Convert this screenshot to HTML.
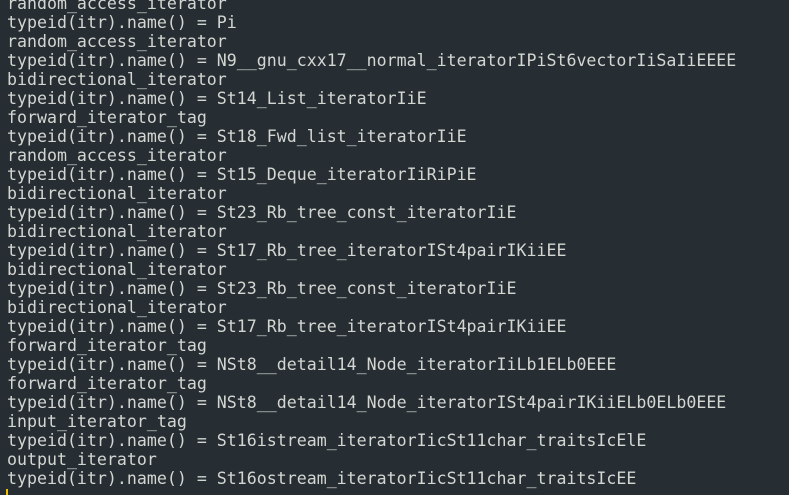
<!DOCTYPE html>
<html><head><style>
html,body{margin:0;padding:0;}
body{width:789px;height:495px;overflow:hidden;background:#262e33;position:relative;}
pre{position:absolute;left:7px;top:-6.5px;margin:0;font-family:"DejaVu Sans Mono","Liberation Mono",monospace;font-size:16.6px;line-height:19px;color:#d4d6d2;}
.cur{position:absolute;left:6px;top:489px;width:2px;height:6px;background:#f0c000;}
</style></head><body>
<pre>random_access_iterator
typeid(itr).name() = Pi
random_access_iterator
typeid(itr).name() = N9__gnu_cxx17__normal_iteratorIPiSt6vectorIiSaIiEEEE
bidirectional_iterator
typeid(itr).name() = St14_List_iteratorIiE
forward_iterator_tag
typeid(itr).name() = St18_Fwd_list_iteratorIiE
random_access_iterator
typeid(itr).name() = St15_Deque_iteratorIiRiPiE
bidirectional_iterator
typeid(itr).name() = St23_Rb_tree_const_iteratorIiE
bidirectional_iterator
typeid(itr).name() = St17_Rb_tree_iteratorISt4pairIKiiEE
bidirectional_iterator
typeid(itr).name() = St23_Rb_tree_const_iteratorIiE
bidirectional_iterator
typeid(itr).name() = St17_Rb_tree_iteratorISt4pairIKiiEE
forward_iterator_tag
typeid(itr).name() = NSt8__detail14_Node_iteratorIiLb1ELb0EEE
forward_iterator_tag
typeid(itr).name() = NSt8__detail14_Node_iteratorISt4pairIKiiELb0ELb0EEE
input_iterator_tag
typeid(itr).name() = St16istream_iteratorIicSt11char_traitsIcElE
output_iterator
typeid(itr).name() = St16ostream_iteratorIicSt11char_traitsIcEE</pre>
<div class="cur"></div>
</body></html>
